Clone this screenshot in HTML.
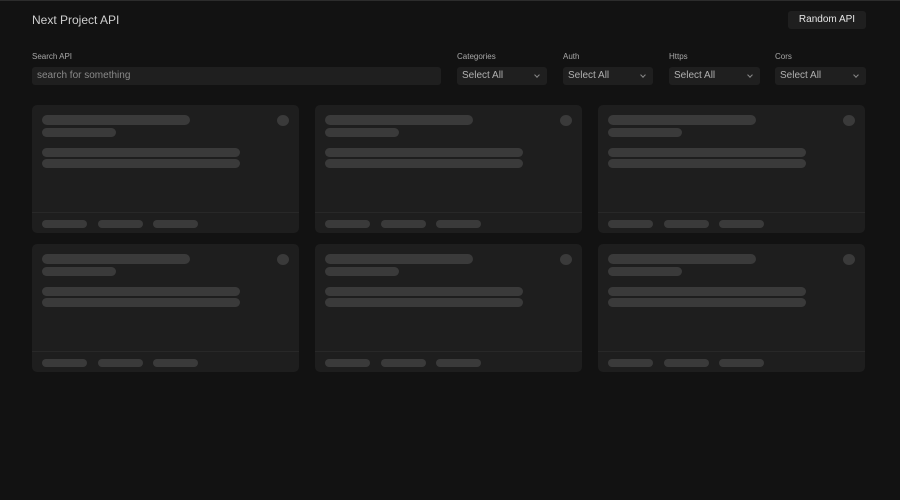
<!DOCTYPE html>
<html><head><style>
*{box-sizing:border-box;margin:0;padding:0}
body{width:900px;height:500px;background:#121212;font-family:"Liberation Sans",sans-serif;position:relative;overflow:hidden}
.a{position:absolute}
.top{left:0;top:0;width:900px;height:1px;background:#2c2c2c}
.t{left:32px;top:13px;font-size:12px;color:#cfcfcf;font-weight:300}
.btn{left:788px;top:11px;width:78px;height:18px;background:#1f1f1f;border-radius:3px;color:#e6e6e6;font-size:10px;text-align:center;line-height:18px}
.lb{font-size:8px;color:#a8a8a8;top:52px}
.in{top:67px;height:18px;background:#1f1f1f;border-radius:3px;font-size:10px;color:#8a8a8a;line-height:18px;padding-left:5px}
.sel{color:#b0b0b0}
.sel:after{content:"";position:absolute;right:8px;top:6px;width:3px;height:3px;border-right:1px solid #888;border-bottom:1px solid #888;transform:rotate(45deg)}
.card{width:267px;height:128px;background:#1e1e1e;border-radius:5px}
.b{position:absolute;background:#3a3a3a;border-radius:5px}
.ft{position:absolute;left:0;right:0;top:107px;border-top:1px solid #282828}
</style></head><body>
<div class="a top"></div>
<div class="a t">Next Project API</div>
<div class="a btn">Random API</div>
<div class="a lb" style="left:32px">Search API</div>
<div class="a lb" style="left:457px">Categories</div>
<div class="a lb" style="left:563px">Auth</div>
<div class="a lb" style="left:669px">Https</div>
<div class="a lb" style="left:775px">Cors</div>
<div class="a in" style="left:32px;width:409px">search for something</div>
<div class="a in sel" style="left:457px;width:90px">Select All</div>
<div class="a in sel" style="left:563px;width:90px">Select All</div>
<div class="a in sel" style="left:669px;width:91px">Select All</div>
<div class="a in sel" style="left:775px;width:91px">Select All</div>
<div id="c"></div>
<script>
var h='';[32,315,598].forEach(function(x){[105,244].forEach(function(y){
h+='<div class="a card" style="left:'+x+'px;top:'+y+'px">'+
'<div class="b" style="left:10px;top:10px;width:148px;height:10px"></div>'+
'<div class="b" style="left:10px;top:23px;width:74px;height:9px"></div>'+
'<div class="b" style="left:245px;top:10px;width:12px;height:11px;border-radius:50%"></div>'+
'<div class="b" style="left:10px;top:43px;width:198px;height:9px"></div>'+
'<div class="b" style="left:10px;top:54px;width:198px;height:9px"></div>'+
'<div class="ft"></div>'+
'<div class="b" style="left:10px;top:115px;width:45px;height:8px"></div>'+
'<div class="b" style="left:66px;top:115px;width:45px;height:8px"></div>'+
'<div class="b" style="left:121px;top:115px;width:45px;height:8px"></div>'+
'</div>';});});
document.getElementById('c').innerHTML=h;
</script>
</body></html>
